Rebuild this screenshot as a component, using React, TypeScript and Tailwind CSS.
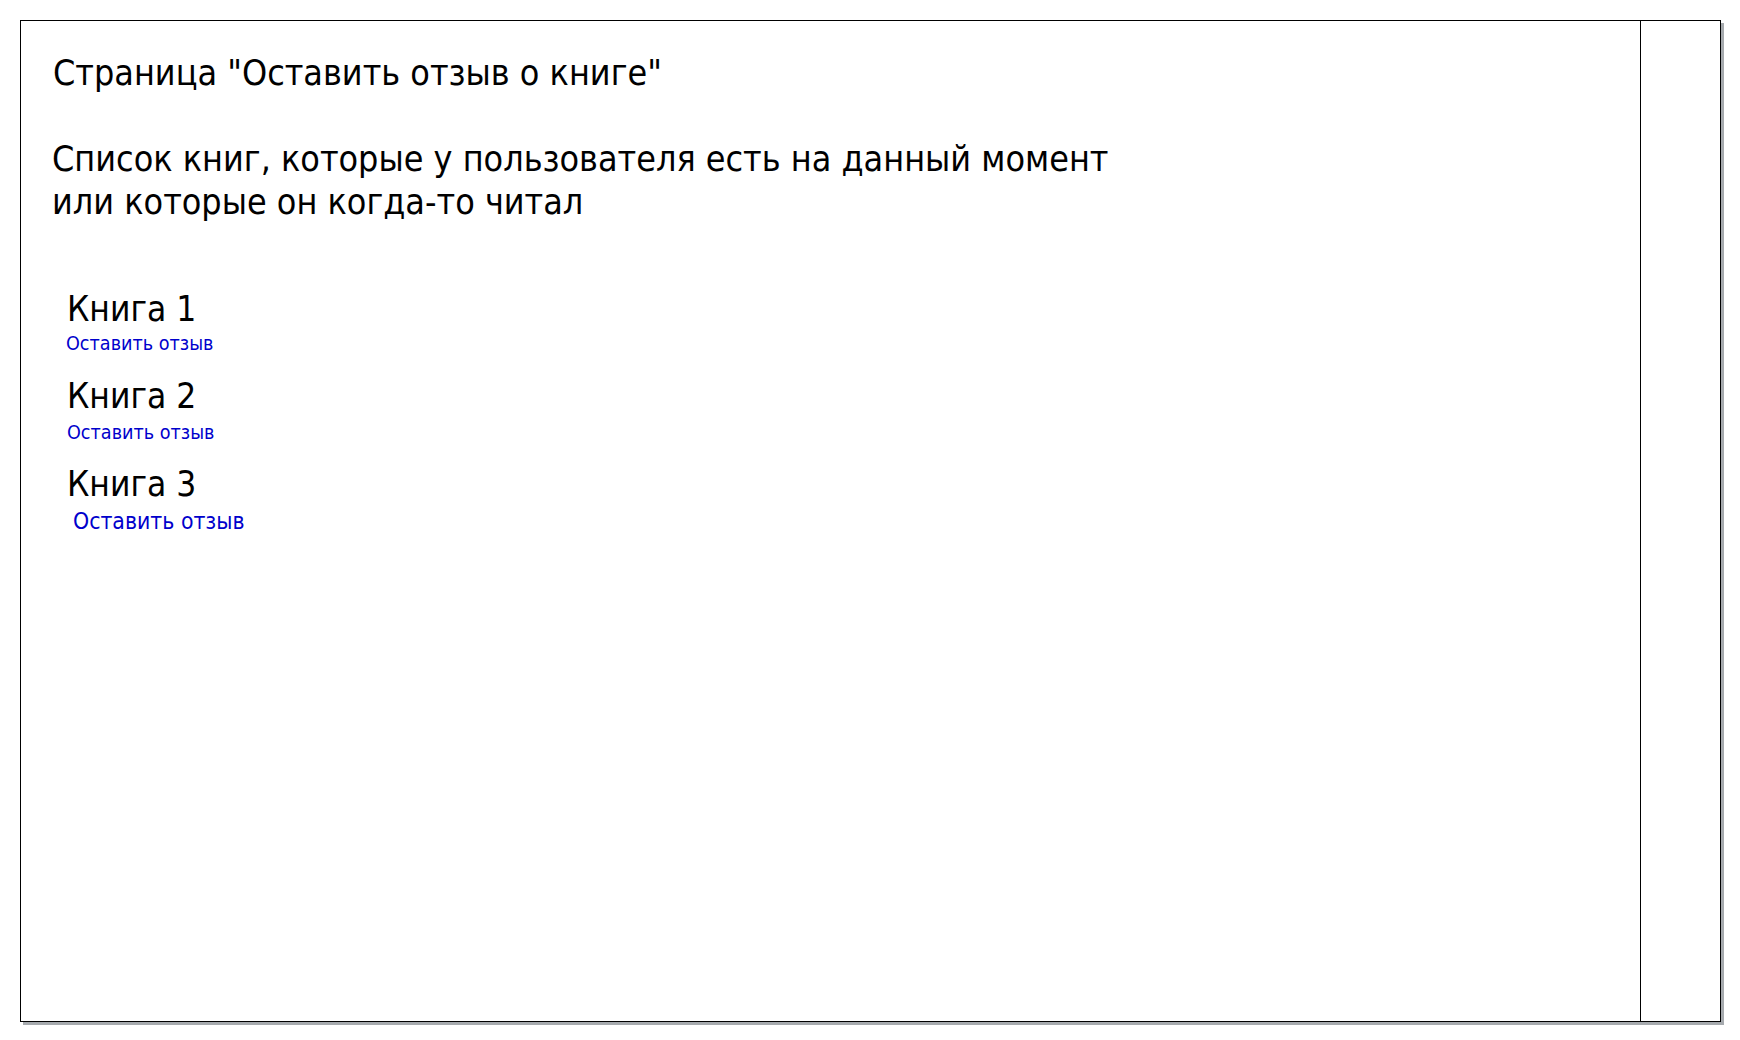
import React from "react";

const font = { fontFamily: '"DejaVu Sans Condensed", "DejaVu Sans", sans-serif' };

export default function App() {
  return (
    <div className="w-[1740px] h-[1040px] bg-white pt-[20px] pl-[20px]" style={font}>
      <div className="flex w-[1701px] h-[1002px] border border-black bg-white shadow-[3px_3px_0_#a6aaae] font-stretch-condensed">
        <div className="flex-1 border-r border-black flex flex-col">
          <div className="pl-[32px] pt-[30px] text-[35.6px] leading-[44px] text-black">
            Страница "Оставить отзыв о книге"
          </div>
          <div className="pl-[31px] pt-[42px] text-[35.6px] leading-[43px] text-black">
            <div>Список книг, которые у пользователя есть на данный момент</div>
            <div>или которые он когда-то читал</div>
          </div>
          <div className="flex flex-col items-start pt-[66px]">
            <div className="pl-[46px] text-[35px] leading-[40px] text-black">Книга 1</div>
            <a className="pl-[45px] mt-[2px] text-[19.6px] leading-[26px] text-[#0000cc]">Оставить отзыв</a>
            <div className="pl-[46px] mt-[19px] text-[35px] leading-[40px] text-black">Книга 2</div>
            <a className="pl-[46px] mt-[4px] text-[19.6px] leading-[26px] text-[#0000cc]">Оставить отзыв</a>
            <div className="pl-[46px] mt-[18px] text-[35px] leading-[40px] text-black">Книга 3</div>
            <a className="pl-[52px] mt-[3px] text-[22.8px] leading-[28px] text-[#0000cc]">Оставить отзыв</a>
          </div>
        </div>
        <div className="w-[79px]" />
      </div>
    </div>
  );
}
